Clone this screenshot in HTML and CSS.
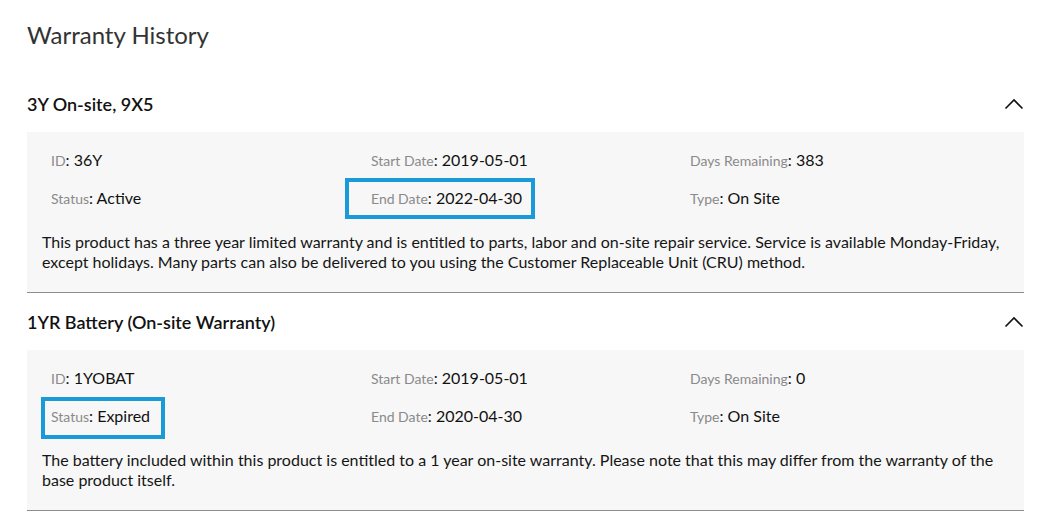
FILE: index.html
```html
<!DOCTYPE html>
<html lang="en">
<head>
<meta charset="utf-8">
<title>Warranty History</title>
<link rel="stylesheet" href="styles.css">
</head>
<body>
<main class="page">
  <h1 class="title">Warranty History</h1>

  <section class="warranty">
    <header class="warranty-head">
      <h2 class="warranty-name">3Y On-site, 9X5</h2>
      <svg class="chevron" width="20" height="12" viewBox="0 0 20 12"><polyline points="1.5,10.5 10,2 18.5,10.5" fill="none" stroke="#111" stroke-width="1.6"/></svg>
    </header>
    <div class="warranty-body">
      <div class="fields">
        <div class="field"><span class="label">ID</span>: 36Y</div>
        <div class="field"><span class="label">Start Date</span>: 2019-05-01</div>
        <div class="field"><span class="label">Days Remaining</span>: 383</div>
        <div class="field"><span class="label">Status</span>: Active</div>
        <div class="field"><span class="marked mark-end"><span class="label">End Date</span>: 2022-04-30</span></div>
        <div class="field"><span class="label">Type</span>: On Site</div>
      </div>
      <p class="desc">This product has a three year limited warranty and is entitled to parts, labor and on-site repair service. Service is available Monday-Friday, except holidays. Many parts can also be delivered to you using the Customer Replaceable Unit (CRU) method.</p>
    </div>
  </section>

  <section class="warranty">
    <header class="warranty-head">
      <h2 class="warranty-name">1YR Battery (On-site Warranty)</h2>
      <svg class="chevron" width="20" height="12" viewBox="0 0 20 12"><polyline points="1.5,10.5 10,2 18.5,10.5" fill="none" stroke="#111" stroke-width="1.6"/></svg>
    </header>
    <div class="warranty-body">
      <div class="fields">
        <div class="field"><span class="label">ID</span>: 1YOBAT</div>
        <div class="field"><span class="label">Start Date</span>: 2019-05-01</div>
        <div class="field"><span class="label">Days Remaining</span>: 0</div>
        <div class="field"><span class="marked mark-status"><span class="label">Status</span>: Expired</span></div>
        <div class="field"><span class="label">End Date</span>: 2020-04-30</div>
        <div class="field"><span class="label">Type</span>: On Site</div>
      </div>
      <p class="desc">The battery included within this product is entitled to a 1 year on-site warranty. Please note that this may differ from the warranty of the base product itself.</p>
    </div>
  </section>
</main>
</body>
</html>
```

FILE: styles.css
```css
* { box-sizing: border-box; }

html, body {
  margin: 0;
  padding: 0;
  background: #fff;
}

body {
  font-family: Lato, "Open Sans", "Liberation Sans", sans-serif;
  color: #111;
}

.page {
  padding: 20px 22px 0 27px;
}

.title {
  margin: 0;
  font-size: 24px;
  line-height: 30px;
  font-weight: 400;
  color: #333;
}

.warranty {
  border-bottom: 1px solid #8e8e8e;
}

.warranty:first-of-type {
  margin-top: 26px;
}

.warranty-head {
  display: flex;
  align-items: center;
  justify-content: space-between;
  height: 56px;
}

.warranty + .warranty .warranty-head {
  height: 57px;
}

.warranty-name {
  margin: 0;
  font-size: 18px;
  line-height: 22px;
  font-weight: 600;
  color: #111;
}

.chevron {
  display: block;
}

.warranty-body {
  background: #f7f7f7;
  padding: 18px 15px 20px 15px;
}

.fields {
  display: grid;
  grid-template-columns: 320px 319px 1fr;
  row-gap: 17px;
  padding-left: 9px;
}

.field {
  font-size: 16px;
  line-height: 20px;
  color: #111;
  white-space: nowrap;
}

.label {
  font-size: 14px;
  color: #8a8a8a;
}

.marked {
  position: relative;
  display: inline-block;
}

.marked::after {
  content: "";
  position: absolute;
  border: 4px solid #1a9ad7;
}

.mark-end::after {
  left: -26px;
  right: -13px;
  top: -10px;
  bottom: -10px;
}

.mark-status::after {
  left: -10px;
  right: -15px;
  top: -9px;
  bottom: -12px;
}

.desc {
  margin: 23px 0 0 0;
  font-size: 16px;
  line-height: 20px;
  color: #151515;
}
```
